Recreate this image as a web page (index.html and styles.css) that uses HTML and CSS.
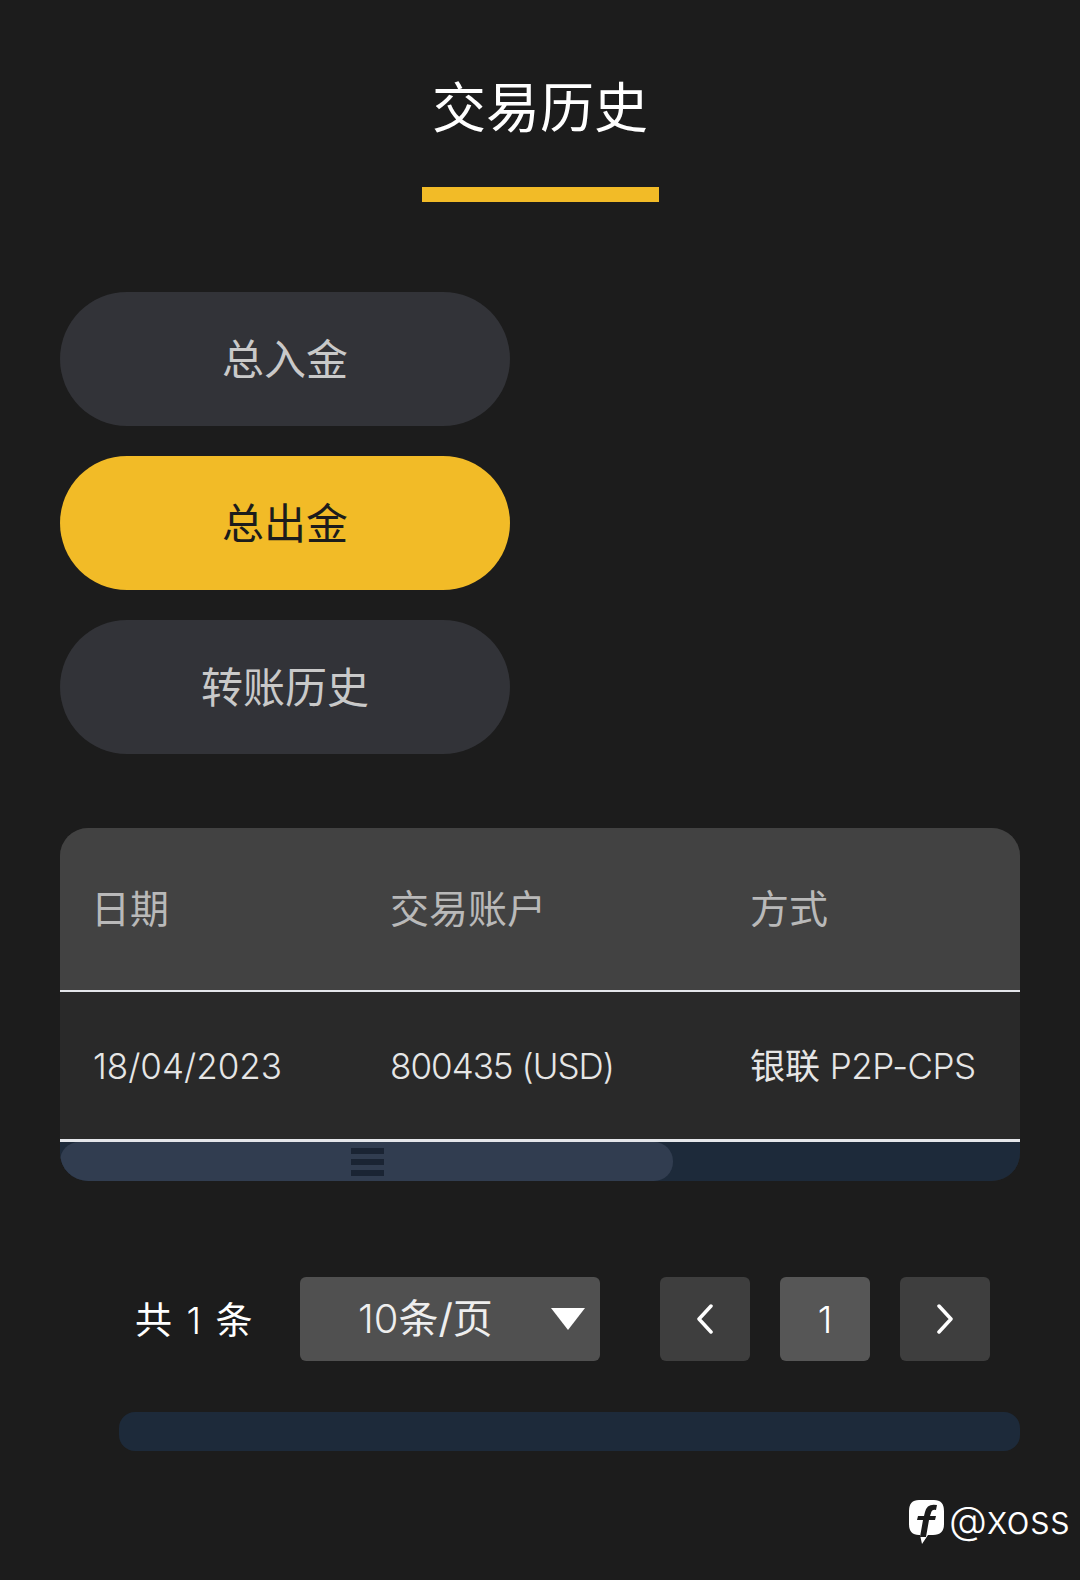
FILE: index.html
```html
<!doctype html>
<html lang="zh-CN">
    <head>
        <meta charset="UTF-8" />
        <meta name="viewport" content="width=device-width, initial-scale=1.0" />
        <title>交易历史</title>
        <link rel="stylesheet" href="styles.css">
    </head>
    <body>
        <div class="container">
            <h1 class="title">交易历史</h1>
            <div class="title-bar"></div>

            <div class="tabs">
                <div class="tab">总入金</div>
                <div class="tab active">总出金</div>
                <div class="tab">转账历史</div>
            </div>

            <div class="table-box">
                <div class="row head">
                    <div class="col-date">日期</div>
                    <div class="col-account">交易账户</div>
                    <div class="col-method">方式</div>
                </div>
                <div class="row body">
                    <div class="col-date latin">18/04/2023</div>
                    <div class="col-account latin tight">800435 (USD)</div>
                    <div class="col-method">银联 <span class="latin">P2P-CPS</span></div>
                </div>
                <div class="scroll">
                    <div class="scroll-thumb">
                        <div class="grip"><span></span><span></span><span></span></div>
                    </div>
                </div>
            </div>

            <div class="pager">
                <div class="total">共 <span class="latin">1</span> 条</div>
                <div class="select">
                    <span><span class="latin">10</span>条/页</span>
                    <svg class="caret" width="34" height="22" viewBox="0 0 34 22"><polygon points="0,0 34,0 17,22" fill="#fff" /></svg>
                </div>
                <div class="page-btn">
                    <svg width="18" height="30" viewBox="0 0 18 30"><path d="M15 2 L3 15 L15 28" fill="none" stroke="#fff" stroke-width="3.5" stroke-linecap="round" stroke-linejoin="round" /></svg>
                </div>
                <div class="page-btn current latin">1</div>
                <div class="page-btn">
                    <svg width="18" height="30" viewBox="0 0 18 30"><path d="M3 2 L15 15 L3 28" fill="none" stroke="#fff" stroke-width="3.5" stroke-linecap="round" stroke-linejoin="round" /></svg>
                </div>
            </div>

            <div class="bottom-scroll"></div>

            <div class="mark">
                <svg class="mark-logo" width="37" height="44" viewBox="0 0 37 44">
                    <path d="M11 0 H26 Q36 0 36 11 V24 Q36 35 25 35 H20 L14 44 L12 35 H11 Q1 35 1 24 V11 Q1 0 11 0 Z" fill="#fff" />
                    <path d="M29 5 Q19 3 17 12 L16 16 H10 L9 20 H15 L12 37 H18 L21 20 H27 L28 16 H22 L23 13 Q24 9 28 10 Z" fill="#1c1c1c" />
                </svg>
                <span class="latin mark-text">@xoss</span>
            </div>
        </div>
    </body>
</html>
```

FILE: styles.css
```css
html,
body {
    margin: 0;
    height: 100%;
    background: #1c1c1c;
    font-family: Inter, "Noto Sans CJK SC", sans-serif;
}
.latin {
    font-weight: 300;
}
.tight {
    letter-spacing: -1px;
}
.container {
    position: relative;
    height: 1580px;
    overflow: hidden;
    padding: 0 60px;
    box-sizing: border-box;
}
.title {
    margin: 0;
    padding-top: 78px;
    height: 62px;
    line-height: 62px;
    font-size: 54px;
    font-weight: 400;
    color: #fff;
    text-align: center;
}
.title-bar {
    width: 237px;
    height: 15px;
    margin: 47px auto 0;
    background: #f2bb27;
}
.tabs {
    display: flex;
    flex-direction: column;
    gap: 30px;
    width: 450px;
    margin-top: 90px;
}
.tab {
    height: 134px;
    line-height: 136px;
    border-radius: 67px;
    background: #323338;
    color: #c9c9c9;
    font-size: 42px;
    text-align: center;
}
.tab.active {
    background: #f2bb27;
    color: #1c1c1c;
}
.table-box {
    margin-top: 74px;
    border-radius: 28px;
    overflow: hidden;
    background: #292929;
}
.row {
    display: flex;
    align-items: center;
    padding-left: 33px;
    border-bottom: 2px solid #e4e6ea;
}
.row.head {
    height: 162px;
    background: #424242;
    color: #b9b9b9;
    font-size: 39px;
    padding-left: 31px;
}
.row.head div {
    margin-top: -6px;
}
.row.head .col-date {
    width: 299px;
}
.row.body {
    height: 147px;
    border-bottom-width: 3px;
    color: #e6e6e6;
    font-size: 35px;
}
.row.body .col-method {
    margin-top: -4px;
}
.row.body .col-method .latin {
    letter-spacing: -0.5px;
}
.col-date {
    width: 297px;
}
.col-account {
    width: 360px;
}
.scroll {
    height: 39px;
    background: #1d2a3a;
}
.scroll-thumb {
    width: 613px;
    height: 39px;
    border-radius: 19px;
    background: #313d50;
    display: flex;
    justify-content: center;
    align-items: center;
}
.grip {
    display: flex;
    flex-direction: column;
    gap: 5px;
    margin-left: 2px;
}
.grip span {
    display: block;
    width: 33px;
    height: 6px;
    background: #1a2433;
}
.pager {
    display: flex;
    align-items: center;
    height: 84px;
    margin-top: 96px;
    padding-left: 75px;
    color: #fff;
}
.total {
    width: 165px;
    font-size: 37px;
    white-space: pre;
    word-spacing: 4px;
    margin-top: -3px;
}
.select {
    position: relative;
    width: 300px;
    height: 84px;
    line-height: 84px;
    margin-right: 60px;
    padding-left: 58px;
    box-sizing: border-box;
    border-radius: 6px;
    background: #505050;
    color: #eee;
    font-size: 40px;
}
.caret {
    position: absolute;
    right: 15px;
    top: 31px;
}
.page-btn {
    display: flex;
    align-items: center;
    justify-content: center;
    width: 90px;
    height: 84px;
    margin-right: 30px;
    border-radius: 6px;
    background: #3e3e3e;
    font-size: 37px;
}
.page-btn.current {
    background: #565656;
}
.bottom-scroll {
    height: 39px;
    margin: 51px 0 0 59px;
    border-radius: 16px;
    background: #1d2a3a;
}
.mark {
    position: absolute;
    right: 10px;
    top: 1500px;
    display: flex;
    align-items: center;
    gap: 4px;
    color: #fff;
    font-size: 39px;
}
.mark-text {
    margin-top: -6px;
}
```
